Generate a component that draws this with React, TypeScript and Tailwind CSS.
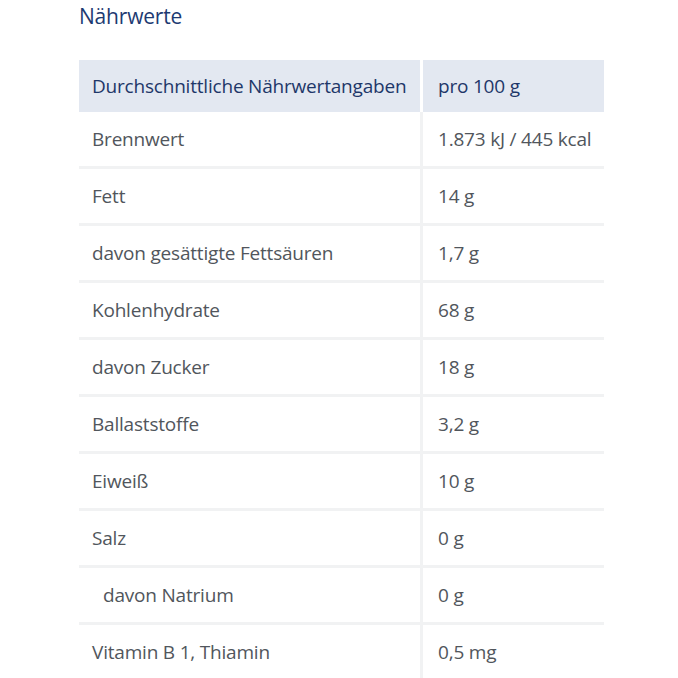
const rows = [
    { label: "Brennwert", value: "1.873 kJ / 445 kcal" },
    { label: "Fett", value: "14 g" },
    { label: "davon gesättigte Fettsäuren", value: "1,7 g" },
    { label: "Kohlenhydrate", value: "68 g" },
    { label: "davon Zucker", value: "18 g" },
    { label: "Ballaststoffe", value: "3,2 g" },
    { label: "Eiweiß", value: "10 g" },
    { label: "Salz", value: "0 g" },
    { label: "davon Natrium", value: "0 g", indent: true },
    { label: "Vitamin B 1, Thiamin", value: "0,5 mg" },
]

const App = () => {
    return (
        <div className="w-[678px] h-[678px] bg-white overflow-hidden pl-[79px] font-['Open_Sans',sans-serif]">
            <h2 className="text-[21px] leading-[32px] text-[#1d3a72] tracking-[-0.2px]">Nährwerte</h2>

            <div className="w-[525px] mt-[28px] text-[19px] tracking-[-0.2px]">
                {/* Header */}
                <div className="flex h-[52px] text-[#1e3769]">
                    <div className="w-[341px] bg-[#e3e8f1] flex items-center pl-[13px]">
                        Durchschnittliche Nährwertangaben
                    </div>
                    <div className="w-[3px]" />
                    <div className="flex-1 bg-[#e3e8f1] flex items-center pl-[15px]">pro 100 g</div>
                </div>

                {/* Rows */}
                {rows.map(({ label, value, indent }) => (
                    <div key={label} className="flex h-[57px] border-b-[3px] border-[#f1f2f3] text-[#51565c]">
                        <div className={`w-[341px] flex items-center ${indent ? 'pl-[24px]' : 'pl-[13px]'}`}>
                            {label}
                        </div>
                        <div className="w-[3px] bg-[#f1f2f3]" />
                        <div className="flex-1 flex items-center pl-[15px]">{value}</div>
                    </div>
                ))}
            </div>
        </div>
    )
}

export default App
